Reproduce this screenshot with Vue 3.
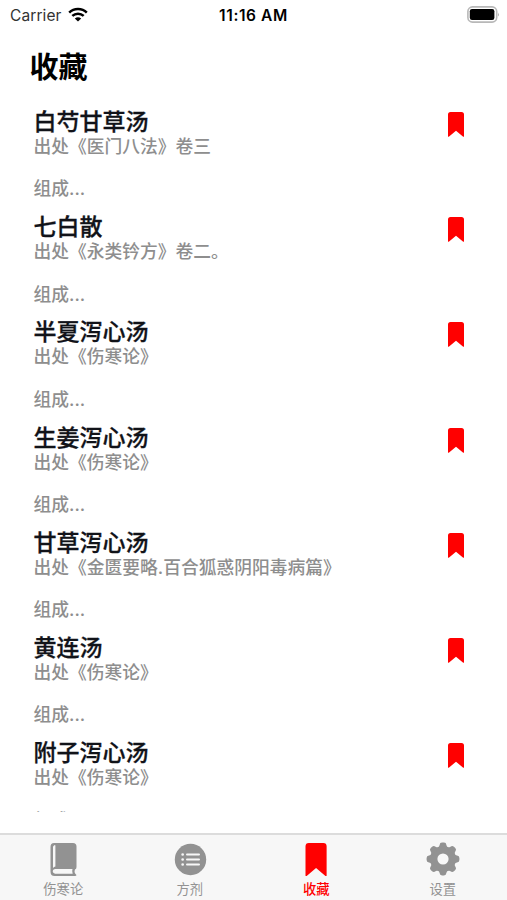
<template>
    <div class="container">
        <div class="status-bar">
            <div class="carrier">
                <span>Carrier</span>
                <svg class="wifi" viewBox="0 0 20 15">
                    <path d="M1.2 5.6C6 .9 14 .9 18.8 5.6" />
                    <path d="M4.3 8.9C7.5 5.9 12.5 5.9 15.7 8.9" />
                    <path class="dot" d="M10 14.4L6.8 11.4Q10 8.9 13.2 11.4Z" />
                </svg>
            </div>
            <span class="time">11:16 AM</span>
            <div class="battery">
                <svg viewBox="0 0 33 17">
                    <rect x=".9" y=".9" width="28.800" height="15.200" rx="4.600" fill="#fff" stroke="#b8b8b8" stroke-width="1.600" />
                    <rect x="2.800" y="3" width="24.600" height="11" rx="2.200" fill="#000" />
                    <path d="M31 6.500Q32.800 8.500 31 10.500Z" fill="#b0b0b0" />
                </svg>
            </div>
        </div>

        <h1 class="title">收藏</h1>

        <ul class="list">
            <li class="item" v-for="item in favorites" :key="item.name">
                <div class="item-text">
                    <h2>{{ item.name }}</h2>
                    <p>出处{{ item.source }}</p>
                    <p class="compose">组成...</p>
                </div>
                <svg class="mark" viewBox="0 0 16 25">
                    <path :d="bookmark" />
                </svg>
            </li>
        </ul>

        <nav class="tab-bar">
            <button type="button" class="tab" v-for="tab in tabs" :key="tab.id" :class="{ active: current === tab.id }" @click="current = tab.id">
                <svg v-if="tab.id === 'book'" class="icon" viewBox="0 0 34 34">
                    <path d="M8 1H27Q30.500 1 30.500 4.500V25Q30.500 27 29 27.500Q27.600 30.500 30.500 33Q30.300 34 29 34H8.500Q4.500 34 4.500 29.500V5Q4.500 1 8 1Z" />
                    <path class="cut" d="M8 3.500Q9.400 2.500 9.400 4V24.500Q8 24.700 7 26V5Q7 4 8 3.500Z" />
                    <path class="cut" d="M9 27H26.500Q25.700 29.500 26.700 31.700H9Q6.700 31.300 6.700 29.300T9 27Z" />
                </svg>
                <svg v-else-if="tab.id === 'formula'" class="icon" viewBox="0 0 34 34">
                    <circle cx="17.500" cy="17.500" r="15.700" />
                    <path class="line" d="M14 12.500H26M14 17.500H26M14 22.500H26" />
                    <path class="line dots" d="M9.600 12.500H9.700M9.600 17.500H9.700M9.600 22.500H9.700" />
                </svg>
                <svg v-else-if="tab.id === 'favorite'" class="icon" viewBox="0 0 34 34">
                    <path transform="translate(6.500 1) scale(1.320 1.340)" :d="bookmark" />
                </svg>
                <svg v-else class="icon" viewBox="0 0 34 34">
                    <circle cx="17" cy="17" r="9.300" fill="none" stroke="currentColor" stroke-width="7.400" />
                    <path v-for="n in 8" :key="n" :transform="`rotate(${n * 45} 17 17)`" d="M12.200 7L13.600 3Q13.800 .6 16 .6H18Q20.200 .6 20.400 3L21.800 7Z" />
                </svg>
                <span>{{ tab.label }}</span>
            </button>
        </nav>
    </div>
</template>

<script setup>
import { ref } from 'vue';

const bookmark = 'M2.500 0H13.500Q16 0 16 2.500V24Q16 25.400 14.900 24.500L8 18.700L1.100 24.500Q0 25.400 0 24V2.500Q0 0 2.500 0Z';

const current = ref('favorite');

const tabs = [
    { id: 'book', label: '伤寒论' },
    { id: 'formula', label: '方剂' },
    { id: 'favorite', label: '收藏' },
    { id: 'setting', label: '设置' },
];

const favorites = [
    { name: '白芍甘草汤', source: '《医门八法》卷三' },
    { name: '七白散', source: '《永类钤方》卷二。' },
    { name: '半夏泻心汤', source: '《伤寒论》' },
    { name: '生姜泻心汤', source: '《伤寒论》' },
    { name: '甘草泻心汤', source: '《金匮要略.百合狐惑阴阳毒病篇》' },
    { name: '黄连汤', source: '《伤寒论》' },
    { name: '附子泻心汤', source: '《伤寒论》' },
];
</script>

<style>
body{
    margin: 0;
    background: #fff;
}
</style>

<style scoped>
.container{
    width: 100%;
    height: 100vh;
    box-sizing: border-box;
    overflow: hidden;

    display: flex;
    flex-direction: column;

    font-family: Inter, "Noto Sans CJK SC", sans-serif;
    color: #000;
}

.status-bar{
    height: 30px;
    flex: none;
    padding: 0 7px 0 10px;

    display: grid;
    grid-template-columns: 1fr auto 1fr;
    align-items: center;

    font-size: 15.5px;
}

.carrier{
    display: flex;
    align-items: center;
    gap: 6px;
    color: #333;
    letter-spacing: 0.1px;
}

.wifi{
    width: 20px;
    height: 15px;
    margin-top: -2px;
    fill: none;
    stroke: #000;
    stroke-width: 2.5;
}

.wifi .dot{
    fill: #000;
    stroke: none;
}

.time{
    margin-right: 3px;
    font-weight: 600;
    letter-spacing: 0.6px;
}

.battery{
    display: flex;
    justify-content: flex-end;
}

.battery svg{
    width: 33px;
    height: 17px;
    margin-top: -2px;
}

.title{
    flex: none;
    height: 77px;
    margin: 0;
    padding-left: 29.5px;
    box-sizing: border-box;

    font-size: 29px;
    font-weight: 700;
    line-height: 75px;
}

.list{
    flex: none;
    height: 705px;
    margin: 0;
    padding: 0 42px 0 33.5px;
    overflow: hidden;
    list-style: none;
}

.item{
    height: 105.2px;

    display: flex;
    justify-content: space-between;
    align-items: flex-start;
}

.item h2{
    margin: 0;
    padding-top: 1px;
    font-size: 23px;
    font-weight: 500;
    line-height: 28px;
    color: #111319;
    -webkit-text-stroke: 0.3px #111319;
}

.item p{
    margin: 0;
    font-size: 17.75px;
    font-weight: 500;
    line-height: 21.2px;
    color: #8e8e8e;
    white-space: nowrap;
}

.item .compose{
    margin-top: 21.2px;
}

.mark{
    width: 16px;
    height: 25px;
    margin-top: 5px;
    margin-right: 1px;
    fill: #f00;
}

.tab-bar{
    flex: 1;
    margin-top: 21px;
    padding-right: 1px;
    border-top: 2px solid #dcdcdc;
    background: #f7f7f7;

    display: grid;
    grid-template-columns: repeat(4, 1fr);
}

.tab{
    padding: 7px 0 0;
    border: none;
    background: none;
    color: #929292;
    font-family: inherit;
    font-size: 13.3px;
    line-height: 20px;

    display: flex;
    flex-direction: column;
    align-items: center;
    gap: 3px;
}

.tab.active{
    color: #f00;
    font-weight: 500;
}

.icon{
    width: 34px;
    height: 34px;
    fill: currentColor;
}

.icon .cut{
    fill: #f7f7f7;
}

.icon .line{
    stroke: #f7f7f7;
    stroke-width: 2;
    stroke-linecap: round;
}

.icon .dots{
    stroke-width: 2.6;
}
</style>
